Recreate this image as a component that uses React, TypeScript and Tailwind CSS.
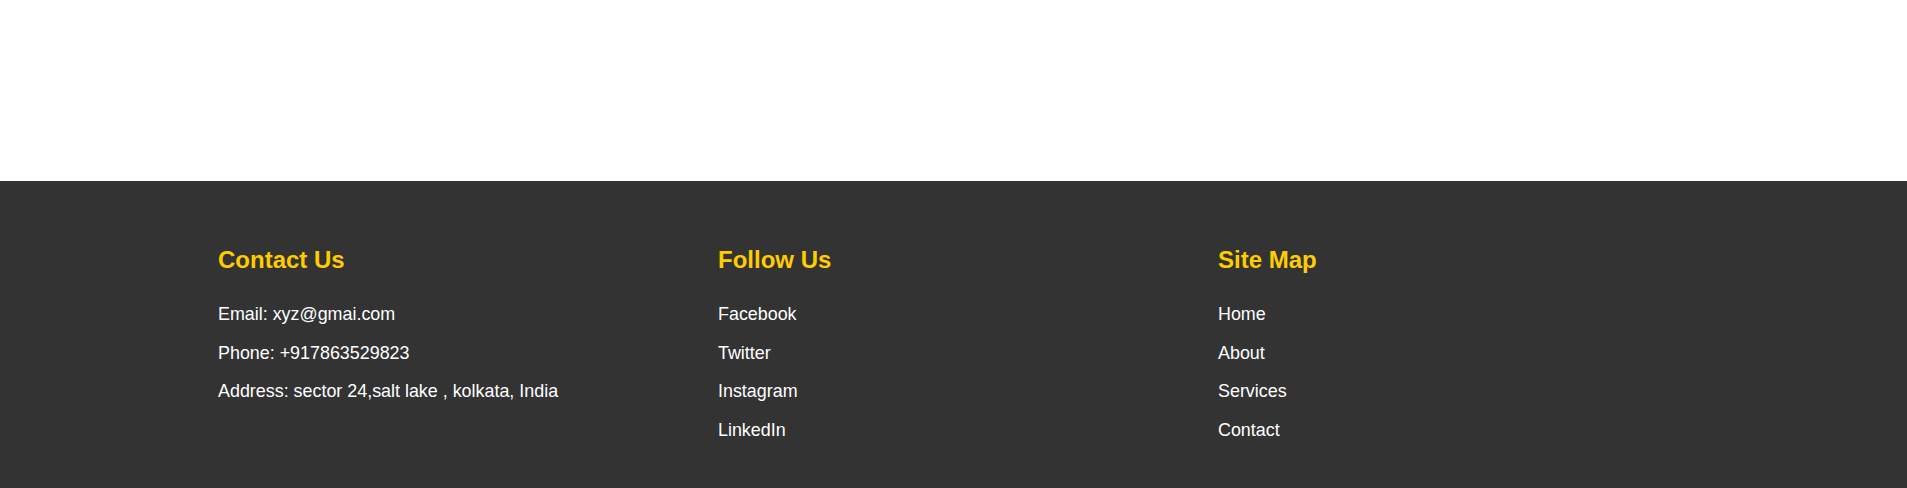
import React from "react";

const columns = [
  {
    title: "Contact Us",
    items: [
      "Email: xyz@gmai.com",
      "Phone: +917863529823",
      "Address: sector 24,salt lake , kolkata, India",
    ],
  },
  {
    title: "Follow Us",
    items: ["Facebook", "Twitter", "Instagram", "LinkedIn"],
  },
  {
    title: "Site Map",
    items: ["Home", "About", "Services", "Contact"],
  },
];

export default function App() {
  return (
    <div className="min-h-screen bg-white font-['Liberation_Sans',Arial,sans-serif]">
      {/* page body is empty above the footer */}
      <div className="h-[181px]" />

      <footer className="bg-[#333333] pt-[65px] pb-[60px]">
        <div className="grid grid-cols-[500px_500px_1fr] pl-[218px]">
          {columns.map((col) => (
            <div key={col.title}>
              <h2 className="text-[24px] leading-[28px] font-bold text-[#ffcc00] mb-[21px]">
                {col.title}
              </h2>
              <ul>
                {col.items.map((item) => (
                  <li key={item} className="text-[17.9px] leading-[38.5px] text-white">
                    {item}
                  </li>
                ))}
              </ul>
            </div>
          ))}
        </div>
      </footer>
    </div>
  );
}
